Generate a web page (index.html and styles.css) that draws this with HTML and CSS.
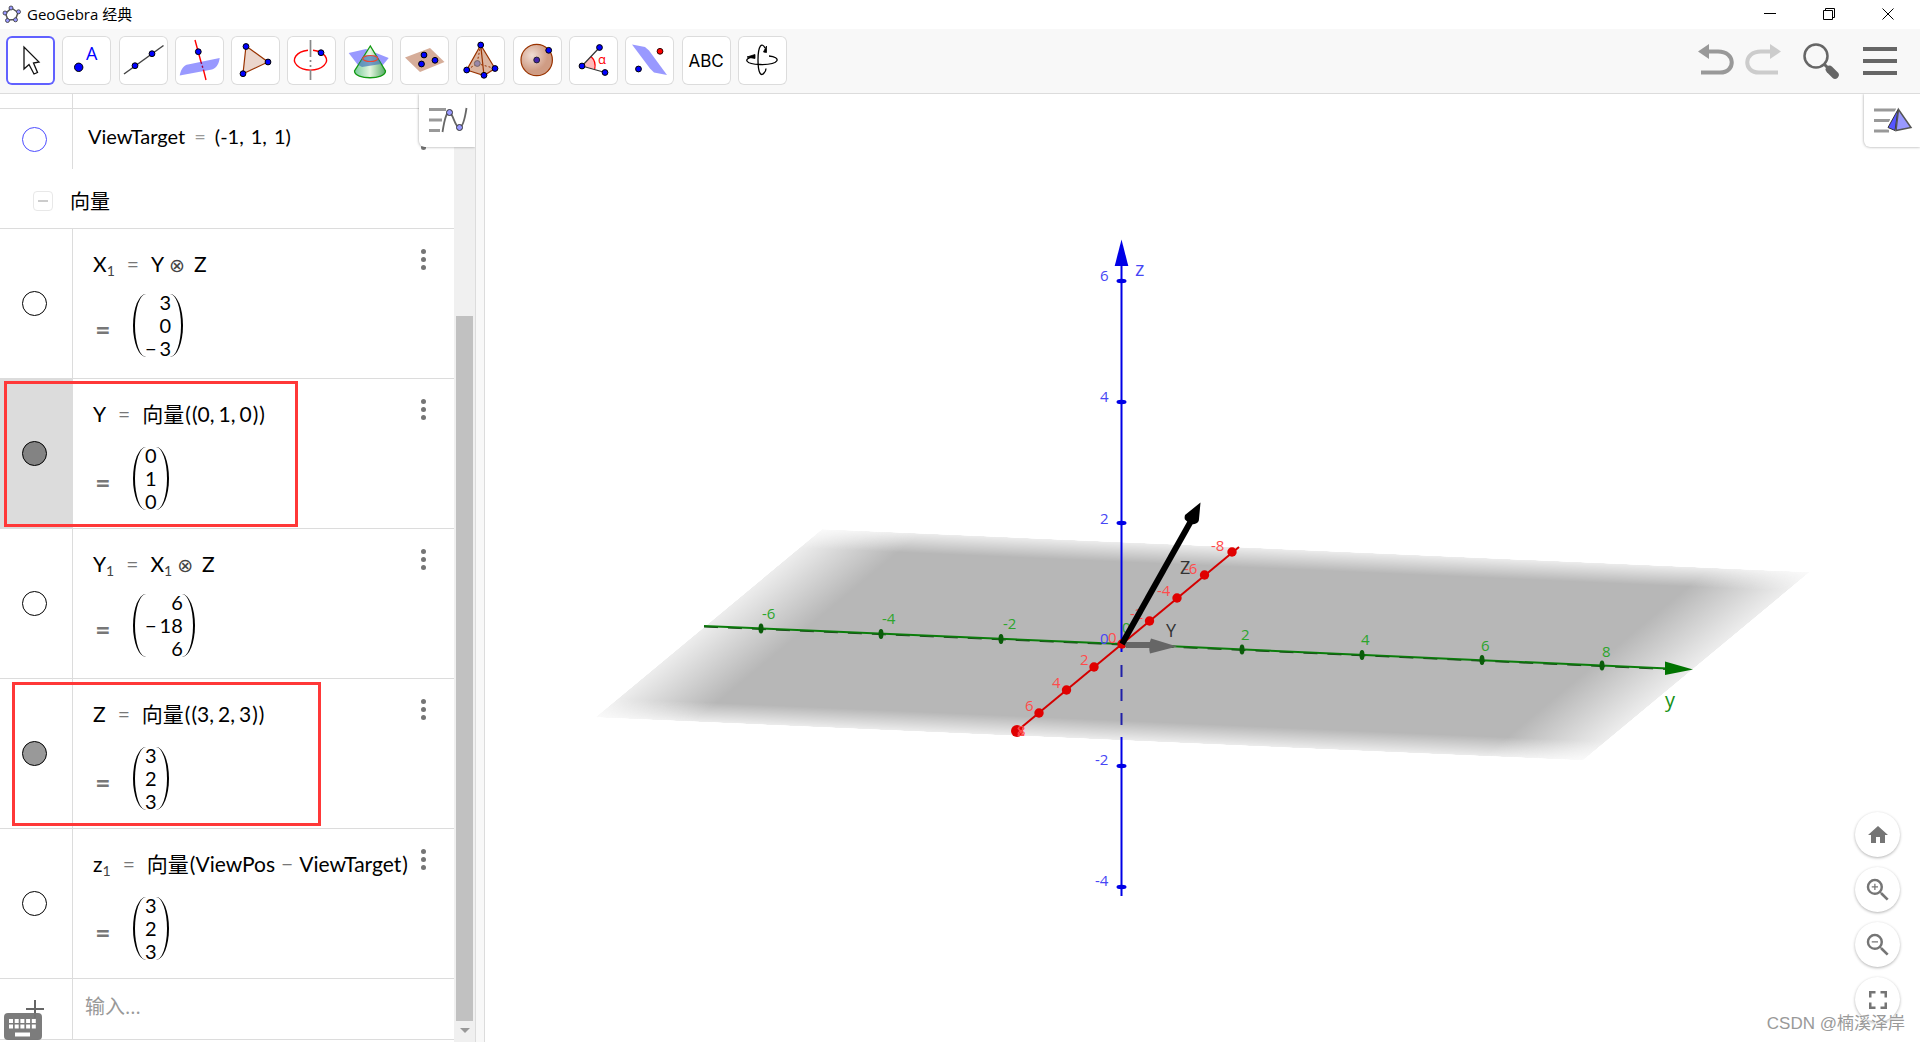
FILE: index.html
```html
<!DOCTYPE html>
<html lang="zh-CN">
<head>
<meta charset="utf-8">
<title>GeoGebra 经典</title>
<link rel="stylesheet" href="styles.css">
</head>
<body>
<div class="app">
  <header class="titlebar">
    <svg class="logo" viewBox="0 0 20 20" aria-hidden="true">
      <path d="M9.500 4 L16 8.500 L13.500 15.500 L6 16 L3.500 9.500 Z" fill="none" stroke="#555" stroke-width="1.500"/>
      <g fill="#99f" stroke="#333" stroke-width=".8"><circle cx="9" cy="4" r="2"/><circle cx="16.500" cy="7.800" r="2"/><circle cx="13.500" cy="15.800" r="2"/><circle cx="5.500" cy="16.500" r="2"/><circle cx="3" cy="9" r="2"/></g>
    </svg>
    <h1 class="title">GeoGebra 经典</h1>
    <div class="window-controls">
      <button aria-label="最小化"><svg viewBox="0 0 12 12"><path d="M0 5.500H12"/></svg></button>
      <button aria-label="还原"><svg viewBox="0 0 12 12"><path d="M.5 2.500H9.500V11.500H.5ZM2.500 2.500V.5H11.500V9.500H9.500"/></svg></button>
      <button aria-label="关闭"><svg viewBox="0 0 12 12"><path d="M.5.5L11.500 11.500M11.500.5L.5 11.500"/></svg></button>
    </div>
  </header>

  <nav class="toolbar" aria-label="工具栏">
    <div class="tools">
      <button class="tool selected" aria-label="移动"><svg viewBox="0 0 49 49"><path d="M18 11V33L23 28.500L28 38L31.500 36.500L27.500 27L33 26Z" fill="#fff" stroke="#111" stroke-width="1.300"/></svg></button>
      <button class="tool" aria-label="描点"><svg viewBox="0 0 49 49"><circle class="pt" cx="16.700" cy="31.300" r="4.200"/><text x="24" y="24" class="tool-a">A</text></svg></button>
      <button class="tool" aria-label="直线"><svg viewBox="0 0 49 49"><path d="M5 38L44.500 9.500" stroke="#444" stroke-width="1.500"/><circle class="pt" cx="16" cy="29.700" r="2.900"/><circle class="pt" cx="33" cy="17.700" r="2.900"/></svg></button>
      <button class="tool" aria-label="垂线"><svg viewBox="0 0 49 49"><path d="M4.700 39.500C6 33 9 29 13 28.500L44.700 22C44 27 42 32 37 33.500Z" fill="#99f"/><path d="M20 4L26 26M28.500 34L31 44" stroke="red" stroke-width="1.400"/><path d="M26 26L28.500 34" stroke="#904" stroke-width="1.400" stroke-dasharray="2 2"/><circle class="pt" cx="23.300" cy="15.700" r="2.900"/></svg></button>
      <button class="tool" aria-label="多边形"><svg viewBox="0 0 49 49"><path d="M15 10L37 26L12 37.700Z" fill="#ebd6cc" stroke="#993300" stroke-width="1.200"/><circle class="pt" cx="15" cy="10.500" r="2.900"/><circle class="pt" cx="37" cy="26" r="2.900"/><circle class="pt" cx="12" cy="37.700" r="2.900"/></svg></button>
      <button class="tool" aria-label="圆"><svg viewBox="0 0 49 49"><path d="M21 14.200A16 10 0 1 0 26 14.200" fill="none" stroke="red" stroke-width="1.400"/><path d="M23.500 4V21M23.500 24V26M23.500 29V31M23.500 34V44" stroke="#888" stroke-width="1.700"/><circle class="pt" cx="34" cy="16.700" r="2.900"/></svg></button>
      <button class="tool" aria-label="相交曲线"><svg viewBox="0 0 49 49"><defs><linearGradient id="cone"><stop offset="0" stop-color="#7c9"/><stop offset=".5" stop-color="#e4f5e0"/><stop offset="1" stop-color="#5a6"/></linearGradient></defs><path d="M4.700 17L22 13L44.700 22L38 30L17 33Z" fill="#99f"/><path d="M26.300 10L10.500 35C10.500 44 41.500 44 41.500 35Z" fill="url(#cone)" stroke="#191" stroke-width="1.300"/><path d="M20 19.500H33L37 28L18 31L14.500 29Z" fill="#47b" opacity=".7"/><ellipse cx="26.300" cy="22.500" rx="7.500" ry="3" fill="none" stroke="#e43" stroke-width="1.200"/></svg></button>
      <button class="tool" aria-label="平面"><svg viewBox="0 0 49 49"><path d="M5 21.500L30 12L44.500 26L20 36Z" fill="#d6ad99"/><circle class="pt" cx="24" cy="19" r="2.900"/><circle class="pt" cx="35" cy="24.300" r="2.900"/><circle class="pt" cx="21.500" cy="28" r="2.900"/></svg></button>
      <button class="tool" aria-label="棱锥"><svg viewBox="0 0 49 49"><path d="M24.700 9L10.700 34L28 39.500L39 32.500Z" fill="#dcb5a0" stroke="#993300" stroke-width="1.200"/><path d="M24.700 9L28 39.500" stroke="#993300" stroke-width="1.200"/><path d="M24.700 9L21 27.500L11 34M21 27.500L39 32.500" fill="none" stroke="#993300" stroke-dasharray="2 2"/><circle cx="21.300" cy="27.500" r="2.900" fill="#98a" stroke="#766"/><circle class="pt" cx="24.700" cy="9" r="2.900"/><circle class="pt" cx="10.700" cy="34" r="2.900"/><circle class="pt" cx="28" cy="39.300" r="2.900"/><circle class="pt" cx="39" cy="32.500" r="2.900"/></svg></button>
      <button class="tool" aria-label="球面"><svg viewBox="0 0 49 49"><defs><radialGradient id="ball" cx=".35" cy=".35"><stop offset="0" stop-color="#f0ddd4"/><stop offset="1" stop-color="#cf9c84"/></radialGradient></defs><circle cx="23.700" cy="24" r="15.700" fill="url(#ball)" stroke="#993300" stroke-width="1.200"/><circle cx="23.700" cy="24" r="2.900" fill="#42a" stroke="#223"/><circle class="pt" cx="35.700" cy="14.300" r="2.900"/></svg></button>
      <button class="tool" aria-label="角度"><svg viewBox="0 0 49 49"><path d="M13 30L22 20.500A13 13 0 0 1 25.700 33Z" fill="#fbb"/><path d="M22 20.500A13 13 0 0 1 25.700 33" fill="none" stroke="red" stroke-width="1.300"/><path d="M30.500 11.500L13 30L36 36.500" fill="none" stroke="#333" stroke-width="1.200"/><text x="29" y="28" class="tool-alpha">α</text><circle class="pt" cx="13" cy="30" r="2.900"/><circle class="pt" cx="30.500" cy="11.500" r="2.900"/><circle class="pt" cx="36" cy="36.500" r="2.900"/></svg></button>
      <button class="tool" aria-label="面反射"><svg viewBox="0 0 49 49"><path d="M7 8.500L20 11L24 14.500L42 39L29 36.500L25 32.500Z" fill="#99f"/><circle class="pt" cx="13.500" cy="33" r="2.900"/><circle cx="35" cy="15.300" r="2.900" fill="red" stroke="#300"/></svg></button>
      <button class="tool" aria-label="文本"><span class="tool-abc">ABC</span></button>
      <button class="tool" aria-label="旋转 3D 视图"><svg viewBox="0 0 49 49"><g fill="none" stroke="#000" stroke-width="1.300"><path d="M15 20.500C5 23 7 28 22 28.500C43 29 43 21 31 20"/><path d="M27 12C24 6 20 9 20 24C20 37 23 41 26 37C27 36 28 34 28 32.500"/></g><path d="M9 21L17 18.500V22.500ZM25.500 16L28.500 10V16.500Z" stroke="#000" stroke-width=".8"/></svg></button>
    </div>
    <div class="actions">
      <button class="undo" aria-label="撤销"><svg viewBox="0 0 36 34"><path d="M9 7.500H20C38 7.500 38 28.500 22 28.500H3" fill="none" stroke="#999" stroke-width="4"/><path d="M0 7.500L11 0V15Z" fill="#999"/></svg></button>
      <button class="redo" aria-label="重做"><svg viewBox="0 0 36 34"><path d="M27 7.500H16C-2 7.500 -2 28.500 14 28.500H33" fill="none" stroke="#ccc" stroke-width="4"/><path d="M36 7.500L25 0V15Z" fill="#ccc"/></svg></button>
      <button class="search" aria-label="搜索"><svg viewBox="0 0 36 36"><circle cx="13" cy="13" r="11.500" fill="none" stroke="#666" stroke-width="2.500"/><path d="M21 21L26 26" stroke="#666" stroke-width="3"/><path d="M26.500 26.500L32 32" stroke="#666" stroke-width="7.500" stroke-linecap="round"/></svg></button>
      <button class="menu" aria-label="菜单"><svg viewBox="0 0 34 30"><path d="M0 3H34M0 15H34M0 27H34" stroke="#666" stroke-width="4"/></svg></button>
    </div>
  </nav>

  <main class="workspace">
    <section class="algebra" aria-label="代数区">
      <div class="list">
        <div class="row stub"><div class="gutter"></div></div>
        <div class="row point">
          <div class="gutter"><input type="checkbox" class="marble blue" aria-label="显示 ViewTarget"></div>
          <div class="content"><p class="expr">ViewTarget<span class="op">=</span>(-1<span class="comma">,</span>1<span class="comma">,</span>1)</p></div>
          <button class="more" aria-label="更多"><i></i><i></i><i></i></button>
        </div>
        <div class="group"><button class="collapse" aria-label="折叠"><span></span></button><h2>向量</h2></div>

        <div class="row vector product">
          <div class="gutter"><input type="checkbox" class="marble" aria-label="显示 X1"></div>
          <div class="content">
            <p class="expr">X<sub>1</sub><span class="eq">=</span>Y<span class="otimes">⊗</span>Z</p>
            <div class="value"><span class="value-eq">=</span><div class="matrix"><span>3</span><span>0</span><span><span class="neg">−</span>3</span></div></div>
          </div>
          <button class="more" aria-label="更多"><i></i><i></i><i></i></button>
        </div>
        <div class="row vector active">
          <div class="gutter"><input type="checkbox" class="marble" checked aria-label="显示 Y"></div>
          <div class="content">
            <p class="expr">Y<span class="eq">=</span>向量<span class="paren">(</span><span class="paren">(</span>0<span class="comma">,</span>1<span class="comma">,</span>0<span class="paren">)</span><span class="paren">)</span></p>
            <div class="value"><span class="value-eq">=</span><div class="matrix"><span>0</span><span>1</span><span>0</span></div></div>
          </div>
          <button class="more" aria-label="更多"><i></i><i></i><i></i></button>
          <div class="mark mark-y"></div>
        </div>
        <div class="row vector product">
          <div class="gutter"><input type="checkbox" class="marble" aria-label="显示 Y1"></div>
          <div class="content">
            <p class="expr">Y<sub>1</sub><span class="eq">=</span>X<sub>1</sub><span class="otimes">⊗</span>Z</p>
            <div class="value"><span class="value-eq">=</span><div class="matrix"><span>6</span><span><span class="neg">−</span>18</span><span>6</span></div></div>
          </div>
          <button class="more" aria-label="更多"><i></i><i></i><i></i></button>
        </div>
        <div class="row vector">
          <div class="gutter"><input type="checkbox" class="marble light" checked aria-label="显示 Z"></div>
          <div class="content">
            <p class="expr">Z<span class="eq">=</span>向量<span class="paren">(</span><span class="paren">(</span>3<span class="comma">,</span>2<span class="comma">,</span>3<span class="paren">)</span><span class="paren">)</span></p>
            <div class="value"><span class="value-eq">=</span><div class="matrix"><span>3</span><span>2</span><span>3</span></div></div>
          </div>
          <button class="more" aria-label="更多"><i></i><i></i><i></i></button>
          <div class="mark mark-z"></div>
        </div>
        <div class="row vector">
          <div class="gutter"><input type="checkbox" class="marble" aria-label="显示 z1"></div>
          <div class="content">
            <p class="expr">z<sub>1</sub><span class="eq">=</span>向量<span class="paren">(</span>ViewPos<span class="minus">−</span>ViewTarget<span class="paren">)</span></p>
            <div class="value"><span class="value-eq">=</span><div class="matrix"><span>3</span><span>2</span><span>3</span></div></div>
          </div>
          <button class="more" aria-label="更多"><i></i><i></i><i></i></button>
        </div>
        <div class="row entry">
          <div class="gutter"><svg class="plus" viewBox="0 0 18 18" aria-hidden="true"><path d="M9 0V18M0 9H18" stroke="#666" stroke-width="2"/></svg></div>
          <input class="entry-box" type="text" placeholder="输入..." aria-label="输入">
        </div>
      </div>
      <div class="scrollbar" aria-hidden="true"><div class="thumb"></div><div class="arrow"></div></div>
      <button class="view-tab tab-algebra" aria-label="代数区样式">
        <svg viewBox="0 0 40 28"><path d="M0 3.500H17M0 14H13M0 24.500H11" stroke="#999" stroke-width="3"/><path d="M13.500 26C16 10 18 6 20.500 6.500C24 7 26 22 30.500 21.500C34 21 36 12 37.500 2" fill="none" stroke="#666" stroke-width="1.800"/><g fill="#99f" stroke="#333"><circle cx="20.500" cy="6.500" r="3"/><circle cx="30.500" cy="21.500" r="3"/></g></svg>
      </button>
      <button class="keyboard" aria-label="键盘"><svg viewBox="0 0 38 27"><rect width="38" height="27" rx="4" fill="#757575"/><path d="M5 8H32M5 13.500H32" stroke="#fff" stroke-width="4" stroke-dasharray="4 1.700"/><path d="M11 21.500H26" stroke="#fff" stroke-width="4"/></svg></button>
    </section>

    <div class="splitter"></div>

    <section class="view3d" aria-label="3D 绘图区">
      <svg class="scene" viewBox="485 94 1435 948" preserveAspectRatio="xMidYMid meet">
        <defs>
          <linearGradient id="fadeX"><stop offset="0" stop-color="#fff" stop-opacity=".25"/><stop offset=".1" stop-color="#fff"/><stop offset=".9" stop-color="#fff"/><stop offset="1" stop-color="#fff" stop-opacity=".25"/></linearGradient>
          <linearGradient id="fadeY" x2="0" y2="1"><stop offset="0" stop-color="#fff" stop-opacity=".25"/><stop offset=".1" stop-color="#fff"/><stop offset=".9" stop-color="#fff"/><stop offset="1" stop-color="#fff" stop-opacity=".25"/></linearGradient>
          <mask id="maskX" maskUnits="userSpaceOnUse" x="0" y="0" width="100" height="100"><rect width="100" height="100" fill="url(#fadeX)"/></mask>
          <mask id="maskY" maskUnits="userSpaceOnUse" x="0" y="0" width="100" height="100"><rect width="100" height="100" fill="url(#fadeY)"/></mask>
        </defs>
        <g transform="matrix(9.880 .430 -2.270 1.885 822 529)"><g mask="url(#maskY)"><rect width="100" height="100" fill="#b7b7b7" mask="url(#maskX)"/></g></g>

        <g class="axis-y">
          <path d="M704 626L1122 644L1668 668.500" class="line"/>
          <path d="M704 627L1122 645L1668 669.500" class="shade"/>
          <g class="ticks"><ellipse cx="761" cy="628.500" rx="2.500" ry="5"/><ellipse cx="881" cy="634" rx="2.500" ry="5"/><ellipse cx="1001" cy="639" rx="2.500" ry="5"/><ellipse cx="1242" cy="649.500" rx="2.500" ry="5"/><ellipse cx="1362" cy="655" rx="2.500" ry="5"/><ellipse cx="1482" cy="660" rx="2.500" ry="5"/><ellipse cx="1602" cy="665.500" rx="2.500" ry="5"/></g>
          <path d="M1693 669.500L1665 661.500V675Z" class="head"/>
          <g class="num"><text x="762" y="619">-6</text><text x="882" y="624">-4</text><text x="1003" y="629">-2</text><text x="1122" y="633">0</text><text x="1241" y="640">2</text><text x="1361" y="645">4</text><text x="1481" y="651">6</text><text x="1602" y="657">8</text></g>
          <text x="1665" y="707" class="name">y</text>
        </g>
        <g class="axis-z">
          <path d="M1121.500 260V652M1121.500 737V896" class="line"/>
          <path d="M1121.500 665V677M1121.500 689V701M1121.500 713V725" class="hidden-line"/>
          <path d="M1121.500 239.500L1128.300 266H1114.700Z" class="head"/>
          <g class="ticks"><ellipse cx="1121.500" cy="281" rx="5" ry="2.200"/><ellipse cx="1121.500" cy="402" rx="5" ry="2.200"/><ellipse cx="1121.500" cy="523" rx="5" ry="2.200"/><ellipse cx="1121.500" cy="766" rx="5" ry="2.200"/><ellipse cx="1121.500" cy="887" rx="5" ry="2.200"/></g>
          <g class="num"><text x="1100" y="281">6</text><text x="1100" y="402">4</text><text x="1100" y="524">2</text><text x="1100" y="644">0</text><text x="1095" y="765">-2</text><text x="1095" y="886">-4</text></g>
          <text x="1135" y="276" class="name">z</text>
        </g>
        <g class="axis-x">
          <path d="M1239 547L1017 731" class="line"/>
          <g class="ticks"><circle cx="1232" cy="552" r="4.700"/><circle cx="1204.500" cy="575" r="4.700"/><circle cx="1177" cy="598" r="4.700"/><circle cx="1149.500" cy="621" r="4.700"/><circle cx="1122" cy="644" r="4.700"/><circle cx="1094" cy="667" r="4.700"/><circle cx="1066.500" cy="690" r="4.700"/><circle cx="1039" cy="713" r="4.700"/><circle cx="1017" cy="731" r="6"/></g>
          <g class="num"><text x="1211" y="551">-8</text><text x="1184" y="574">-6</text><text x="1157" y="596">-4</text><text x="1130" y="619">-2</text><text x="1108" y="643">0</text><text x="1080" y="665">2</text><text x="1052" y="688">4</text><text x="1025" y="711">6</text><text x="1017" y="736">8</text><text x="1017" y="736">x</text></g>
        </g>
        <g class="vector-y"><path d="M1124 642H1151L1150 648H1126Z"/><path d="M1177 646.500L1151 638.500Q1148 646 1150 653.500Z"/><text x="1166" y="637">Y</text></g>
        <g class="vector-z"><text x="1180" y="574">Z</text><path d="M1122 644L1191 521" class="shaft"/><path d="M1200.500 502.500L1185 515Q1184 519 1185.500 520Q1191 526 1196 523.500Q1199 522 1199 519Z"/></g>
      </svg>
      <button class="view-tab tab-3d" aria-label="3D 样式">
        <svg viewBox="0 0 40 28"><path d="M0 4H22M0 14.500H16M0 25H15" stroke="#999" stroke-width="3"/><path d="M24 2.500L37.500 21.500L22 25L13.500 21.500Z" fill="#99f" stroke="#fff" stroke-width="3"/><path d="M24 3.500L14 21.500L21 24.500Z" fill="#55f" stroke="#333"/><path d="M24.500 3.500L37 21.500L22 24.500Z" fill="#99f" stroke="#555" stroke-width="1.500"/></svg>
      </button>
      <div class="zoom">
        <button aria-label="主视图"><svg viewBox="0 0 24 24"><path d="M10 20v-6h4v6h5v-8h3L12 3 2 12h3v8z"/></svg></button>
        <button aria-label="放大"><svg class="lens" viewBox="0 0 24 24"><path d="M15.500 14h-.79l-.28-.27A6.471 6.471 0 0 0 16 9.500 6.500 6.500 0 1 0 9.500 16c1.610 0 3.090-.59 4.230-1.570l.27.28v.79l5 4.990L20.490 19l-4.990-5zm-6 0C7.010 14 5 11.990 5 9.500S7.010 5 9.500 5 14 7.010 14 9.500 11.990 14 9.500 14zM12 10h-2v2H9v-2H7V9h2V7h1v2h2v1z"/></svg></button>
        <button aria-label="缩小"><svg class="lens" viewBox="0 0 24 24"><path d="M15.500 14h-.79l-.28-.27A6.471 6.471 0 0 0 16 9.500 6.500 6.500 0 1 0 9.500 16c1.610 0 3.090-.59 4.230-1.570l.27.28v.79l5 4.990L20.490 19l-4.990-5zm-6 0C7.010 14 5 11.990 5 9.500S7.010 5 9.500 5 14 7.010 14 9.500 11.990 14 9.500 14zM7 9h5v1H7z"/></svg></button>
        <button aria-label="全屏"><svg viewBox="0 0 24 24"><path d="M3 3h6.500v2.500h-4v4H3zM21 3h-6.500v2.500h4v4H21zM3 21h6.500v-2.500h-4v-4H3zM21 21h-6.500v-2.500h4v-4H21z"/></svg></button>
      </div>
      <p class="watermark">CSDN @楠溪泽岸</p>
    </section>
  </main>
</div>
</body>
</html>
```
FILE: styles.css
```css
* { box-sizing: border-box; }

body {
  margin: 0;
  background: #fff;
  color: #000;
  font-family: "Open Sans", "Noto Sans CJK SC", sans-serif;
}

h1, h2, p { margin: 0; font-weight: 400; }

button {
  margin: 0;
  padding: 0;
  border: 0;
  background: none;
  font: inherit;
  color: inherit;
}

svg { display: block; }

.app {
  display: flex;
  flex-direction: column;
  height: 100vh;
  overflow: hidden;
}

/* window title */
.titlebar {
  display: flex;
  align-items: center;
  flex: none;
  height: 29px;
  padding: 0 26px 1px 2px;
}
.logo { width: 20px; height: 20px; }
.title { margin-left: 5px; font-size: 15px; line-height: 26px; }
.window-controls { display: flex; gap: 47px; margin-left: auto; }
.window-controls svg { width: 12px; height: 12px; fill: none; stroke: #000; }

/* toolbar */
.toolbar {
  display: flex;
  align-items: center;
  justify-content: space-between;
  flex: none;
  height: 65px;
  padding: 0 23px 1px 6px;
  background: #f8f8f8;
  border-bottom: 1px solid #dcdcdc;
}
.tools { display: flex; justify-content: space-between; width: 781px; }
.tool {
  width: 49px;
  height: 49px;
  background: #fff;
  border-radius: 6px;
  box-shadow: inset 0 0 0 1px #dcdcdc;
}
.tool.selected { box-shadow: inset 0 0 0 2px #6161ff; }
.tool svg { width: 49px; height: 49px; }
.pt { fill: #00f; stroke: #000; stroke-width: 1; }
.tool-a { font-size: 18px; fill: #00f; }
.tool-alpha { font-size: 13px; fill: red; }
.tool-abc { font-family: Inter, sans-serif; font-size: 17px; }
.actions { display: flex; align-items: center; }
.undo svg, .redo svg { width: 36px; height: 34px; }
.redo { margin-left: 11px; }
.search { margin-left: 22px; }
.search svg { width: 36px; height: 36px; }
.menu { margin-left: 24px; }
.menu svg { width: 34px; height: 30px; }

.workspace { display: flex; flex: 1; min-height: 0; }

/* algebra list */
.algebra {
  position: relative;
  display: flex;
  flex: none;
  width: 475px;
  overflow: hidden;
}
.list { flex: 1; min-width: 0; }
.row {
  position: relative;
  display: flex;
  border-bottom: 1px solid #dcdcdc;
}
.gutter {
  display: flex;
  align-items: center;
  justify-content: center;
  flex: none;
  width: 73px;
  padding-right: 3px;
  border-right: 1px solid #dcdcdc;
}
.stub { height: 15px; }
.point { height: 60px; border-bottom: 0; }
.vector { height: 150px; }
.active .gutter { background: #dcdcdc; }
.marble {
  appearance: none;
  width: 25px;
  height: 25px;
  margin: 0;
  border: 1px solid #000;
  border-radius: 50%;
  background: #fff;
}
.marble.blue { border-color: #4d4dff; }
.marble:checked { background: #838383; }
.marble.light:checked { background: #999; }

.content { flex: 1; padding: 19px 0 0 20px; }
.expr, .matrix {
  font-family: Lato, "Noto Sans CJK SC", sans-serif;
  font-size: 21px;
}
.matrix { font-size: 20px; }
.expr { height: 32px; line-height: 32px; white-space: nowrap; }
.point .content { padding: 11px 0 0 15px; }
.point .expr { font-size: 20px; }
.point .comma { margin-right: 7px; }
.op { margin: 0 9px; color: #999; }
.expr sub { font-size: 14px; line-height: 0; vertical-align: -4px; color: #444; }
.eq { margin: 0 12px; color: #777; }
.otimes { margin: 0 9px 0 5px; font-family: "DejaVu Sans", sans-serif; font-size: 19px; color: #444; }
.comma { margin-right: 4px; }
.paren { margin-left: 1px; }
.minus { margin: 0 6px; color: #777; }
.value { display: flex; align-items: center; margin-top: 14px; }
.product .value { margin-top: 11px; }
.value-eq {
  width: 40px;
  padding: 8px 0 0 3px;
  font-size: 24px;
  line-height: 24px;
  font-weight: 700;
  color: #777;
}
.matrix {
  position: relative;
  display: flex;
  flex-direction: column;
  align-items: flex-end;
  padding: 0 12px;
  line-height: 23px;
}
.neg { margin-right: 3px; }
.matrix::before, .matrix::after {
  content: "";
  position: absolute;
  top: 3px;
  bottom: 3px;
  width: 11px;
}
.matrix::before { left: 0; border-left: 2px solid #000; border-radius: 100% 0 0 100% / 50%; }
.matrix::after { right: 0; border-right: 2px solid #000; border-radius: 0 100% 100% 0 / 50%; }

.more {
  position: absolute;
  top: 20px;
  right: 28px;
  display: flex;
  flex-direction: column;
  gap: 3px;
}
.more i { width: 5px; height: 5px; border-radius: 50%; background: #757575; }
.mark { position: absolute; border: 3px solid #ff3838; }
.mark-y { left: 4px; top: 2px; width: 294px; height: 146px; }
.mark-z { left: 12px; top: 3px; width: 309px; height: 144px; }

.group {
  display: flex;
  align-items: center;
  height: 60px;
  padding: 4px 0 0 33px;
  border-bottom: 1px solid #dcdcdc;
}
.group h2 { margin-left: 17px; font-size: 20px; line-height: 30px; padding-top: 2px; }
.collapse {
  display: flex;
  align-items: center;
  justify-content: center;
  width: 20px;
  height: 20px;
  border: 1px solid #e8e8e8;
  border-radius: 4px;
}
.collapse span { width: 10px; height: 2px; background: #ccc; }

.entry { height: 61px; }
.plus { width: 18px; height: 18px; }
.entry-box {
  flex: 1;
  min-width: 0;
  padding: 0 12px 6px;
  border: 0;
  background: none;
  font: 20px "Open Sans", "Noto Sans CJK SC", sans-serif;
}
.entry-box::placeholder { color: #999; }
.keyboard { position: absolute; left: 4px; bottom: 2px; opacity: .95; }
.keyboard svg { width: 38px; height: 27px; }

.scrollbar {
  display: flex;
  flex-direction: column;
  align-items: center;
  width: 21px;
  padding: 222px 0 9px;
  background: #f0f0f0;
}
.thumb { flex: 1; width: 17px; background: #c1c1c1; }
.arrow {
  margin-top: 7px;
  border: 5px solid transparent;
  border-top-color: #999;
  border-bottom: 0;
}

.view-tab {
  position: absolute;
  top: 0;
  right: 0;
  display: flex;
  align-items: center;
  width: 56px;
  height: 53px;
  padding: 0 0 1px 10px;
  background: #fff;
  border-radius: 0 0 0 6px;
  box-shadow: 0 0 3px rgba(0, 0, 0, .4);
}
.view-tab svg { width: 40px; height: 28px; }

.splitter {
  flex: none;
  width: 10px;
  background: #f8f8f8;
  border: solid #dcdcdc;
  border-width: 0 1px;
}

/* 3D view */
.view3d { position: relative; flex: 1; min-width: 0; overflow: hidden; }
.scene { width: 100%; height: 100%; }
.num { font-size: 15px; }
.name { font-size: 20px; }
.axis-y .line { fill: none; stroke: #0a7d0a; stroke-width: 2; }
.axis-y .shade { fill: none; stroke: #175217; stroke-width: 1; stroke-dasharray: 14 10; }
.axis-y .ticks { fill: #0a5c0a; }
.axis-y .head { fill: #007300; }
.axis-y .num { fill: #2ca52c; }
.axis-y .name { fill: #159015; }
.axis-z .line { fill: none; stroke: #0000e6; stroke-width: 2; }
.axis-z .hidden-line { stroke: #2020a8; stroke-width: 2; }
.axis-z .head, .axis-z .ticks { fill: #0000e6; }
.axis-z .num, .axis-z .name { fill: #4646f5; }
.axis-x .line { stroke: #d40000; stroke-width: 2; }
.axis-x .ticks { fill: #e00000; }
.axis-x .num { fill: #ff4c4c; }
.vector-y { fill: #666; }
.vector-y text, .vector-z text { font-size: 18px; fill: #333; }
.vector-z .shaft { stroke: #000; stroke-width: 6; }

.zoom {
  position: absolute;
  right: 20px;
  bottom: 20px;
  display: flex;
  flex-direction: column;
  gap: 10px;
}
.zoom button {
  display: flex;
  align-items: center;
  justify-content: center;
  width: 45px;
  height: 45px;
  border-radius: 50%;
  background: #fff;
  box-shadow: 0 1px 3px rgba(0, 0, 0, .3);
}
.zoom svg { width: 24px; height: 24px; fill: #757575; }
.zoom .lens { width: 30px; height: 30px; }
.watermark {
  position: absolute;
  right: 15px;
  bottom: 4px;
  font: 17px/28px "Liberation Sans", "Noto Sans CJK SC", sans-serif;
  color: #999;
  text-shadow: 1px 1px 0 #fff;
}
```
